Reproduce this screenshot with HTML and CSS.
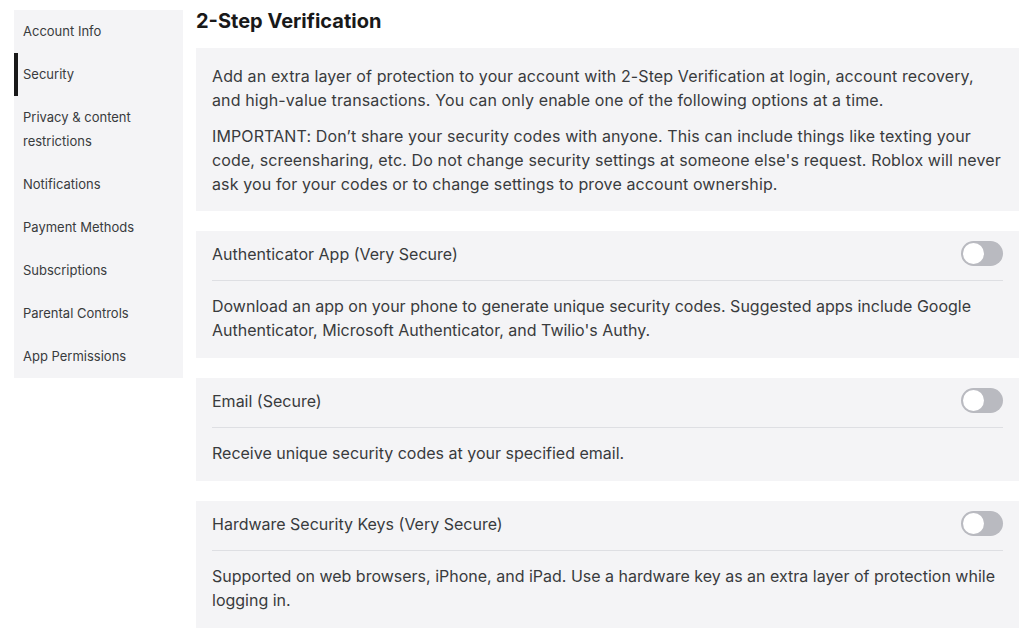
FILE: index.html
```html
<!DOCTYPE html>
<html>
<head>
    <meta charset="UTF-8">
    <title>Security</title>
    <link rel="stylesheet" href="styles.css">
</head>
<body>
<div class="page">
    <nav class="side-menu">
        <a class="menu-item" href="#">Account Info</a>
        <a class="menu-item active" href="#">Security</a>
        <a class="menu-item" href="#">Privacy &amp; content restrictions</a>
        <a class="menu-item" href="#">Notifications</a>
        <a class="menu-item" href="#">Payment Methods</a>
        <a class="menu-item" href="#">Subscriptions</a>
        <a class="menu-item" href="#">Parental Controls</a>
        <a class="menu-item" href="#">App Permissions</a>
    </nav>

    <main class="content">
        <h1>2-Step Verification</h1>

        <div class="panel intro">
            <p>Add an extra layer of protection to your account with 2-Step Verification at login, account recovery, and high-value transactions. You can only enable one of the following options at a time.</p>
            <p>IMPORTANT: Don’t share your security codes with anyone. This can include things like texting your code, screensharing, etc. Do not change security settings at someone else's request. Roblox will never ask you for your codes or to change settings to prove account ownership.</p>
        </div>

        <div class="panel option">
            <div class="option-header">
                <span class="option-title">Authenticator App (Very Secure)</span>
                <span class="toggle"></span>
            </div>
            <p class="option-desc">Download an app on your phone to generate unique security codes. Suggested apps include Google Authenticator, Microsoft Authenticator, and Twilio's Authy.</p>
        </div>

        <div class="panel option">
            <div class="option-header">
                <span class="option-title">Email (Secure)</span>
                <span class="toggle"></span>
            </div>
            <p class="option-desc">Receive unique security codes at your specified email.</p>
        </div>

        <div class="panel option">
            <div class="option-header">
                <span class="option-title">Hardware Security Keys (Very Secure)</span>
                <span class="toggle"></span>
            </div>
            <p class="option-desc">Supported on web browsers, iPhone, and iPad. Use a hardware key as an extra layer of protection while logging in.</p>
        </div>
    </main>
</div>
</body>
</html>
```

FILE: styles.css
```css
body {
    margin: 0;
    font-family: Inter, "Open Sans", Arial, sans-serif;
    color: #393b3d;
    background-color: #ffffff;
}

.page {
    display: flex;
    align-items: flex-start;
    gap: 13px;
    padding: 10px 5px 0 14px;
}

/* Menu lateral */
.side-menu {
    width: 169px;
    flex-shrink: 0;
    background-color: #f4f4f6;
    display: flex;
    flex-direction: column;
}

.menu-item {
    display: block;
    padding: 9px 9px 10px;
    font-size: 13px;
    line-height: 24px;
    color: #393b3d;
    text-decoration: none;
}

.menu-item.active {
    box-shadow: inset 4px 0 0 #191919;
}

/* Contenido */
.content {
    flex: 1;
    margin-top: -10px;
}

h1 {
    margin: 7px 0 13px;
    font-size: 20px;
    line-height: 28px;
    font-weight: 700;
    color: #191919;
}

.panel {
    background-color: #f4f4f6;
    padding: 0 16px;
    margin-bottom: 20px;
}

.intro {
    padding-top: 16px;
    padding-bottom: 15px;
}

.intro p {
    margin: 0 0 12px;
    font-size: 16px;
    line-height: 24px;
    letter-spacing: 0.12px;
}

.intro p:last-child {
    margin-bottom: 0;
}

.option-header {
    display: flex;
    align-items: center;
    justify-content: space-between;
    padding: 10px 0 14px;
    border-bottom: 1px solid #dedfe3;
}

.option-title {
    font-size: 16px;
    line-height: 24px;
}

.toggle {
    position: relative;
    width: 42px;
    height: 25px;
    border-radius: 13px;
    background-color: #b9bac0;
}

.toggle::after {
    content: "";
    position: absolute;
    top: 2px;
    left: 2px;
    width: 21px;
    height: 21px;
    border-radius: 50%;
    background-color: #ffffff;
}

.option-desc {
    margin: 0;
    padding: 13px 0 16px;
    font-size: 16px;
    line-height: 24px;
}
```
